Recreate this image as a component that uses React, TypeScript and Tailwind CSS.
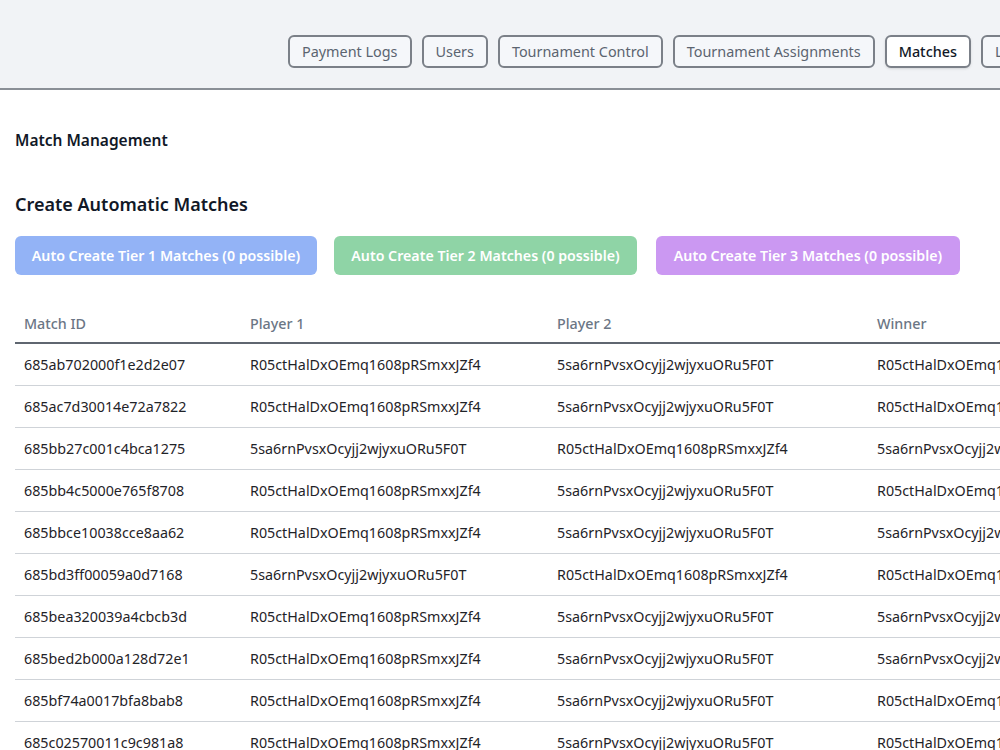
const tabs = [
  "Payment Logs",
  "Users",
  "Tournament Control",
  "Tournament Assignments",
  "Matches",
  "Leaderboard",
];

const A = "R05ctHalDxOEmq1608pRSmxxJZf4";
const B = "5sa6rnPvsxOcyjj2wjyxuORu5F0T";

const matches = [
  { id: "685ab702000f1e2d2e07", p1: A, p2: B, winner: A },
  { id: "685ac7d30014e72a7822", p1: A, p2: B, winner: A },
  { id: "685bb27c001c4bca1275", p1: B, p2: A, winner: B },
  { id: "685bb4c5000e765f8708", p1: A, p2: B, winner: A },
  { id: "685bbce10038cce8aa62", p1: A, p2: B, winner: B },
  { id: "685bd3ff00059a0d7168", p1: B, p2: A, winner: A },
  { id: "685bea320039a4cbcb3d", p1: A, p2: B, winner: B },
  { id: "685bed2b000a128d72e1", p1: A, p2: B, winner: B },
  { id: "685bf74a0017bfa8bab8", p1: A, p2: B, winner: A },
  { id: "685c02570011c9c981a8", p1: A, p2: B, winner: A },
];

export default function App() {
  return (
    <div className="h-[750px] w-[1000px] overflow-hidden bg-white font-['Noto_Sans',sans-serif]">
      {/* top nav */}
      <div className="flex h-[90px] items-start gap-[10px] overflow-hidden whitespace-nowrap border-b-2 border-[#8a8f96] bg-[#f1f3f6] pl-[288px] pt-[35px]">
        {tabs.map((t) => (
          <button
            key={t}
            className={`h-[33px] shrink-0 rounded-md border-2 border-[#7b8088] px-[12px] text-[14.4px] ${
              t === "Matches"
                ? "bg-white font-medium text-[#111827] shadow-sm"
                : "bg-[#f5f7fa] text-[#5b6470]"
            }`}
          >
            {t}
          </button>
        ))}
      </div>

      <div className="px-[15px]">
        <h2 className="mt-[39px] text-[15.5px] font-semibold text-[#111827]">
          Match Management
        </h2>

        <h3 className="mt-[39px] text-[18px] font-semibold text-[#111827]">
          Create Automatic Matches
        </h3>

        <div className="mt-[18px] flex">
          <button className="h-[39px] w-[302px] rounded-md bg-[#93b3f6] text-[14.2px] font-semibold text-white">
            Auto Create Tier 1 Matches (0 possible)
          </button>
          <button className="ml-[17px] h-[39px] w-[303px] rounded-md bg-[#8fd4a6] text-[14.2px] font-semibold text-white">
            Auto Create Tier 2 Matches (0 possible)
          </button>
          <button className="ml-[19px] h-[39px] w-[304px] rounded-md bg-[#cb98f2] text-[14.2px] font-semibold text-white">
            Auto Create Tier 3 Matches (0 possible)
          </button>
        </div>

        <table className="mt-[29px] w-[1200px] table-fixed border-collapse text-left text-[14.3px]">
          <colgroup>
            <col className="w-[226px]" />
            <col className="w-[307px]" />
            <col className="w-[320px]" />
            <col className="w-[347px]" />
          </colgroup>
          <thead>
            <tr className="h-[39px] border-b-2 border-[#5f6670]">
              <th className="px-[9px] font-medium text-[#6b7685]">Match ID</th>
              <th className="px-[9px] font-medium text-[#6b7685]">Player 1</th>
              <th className="px-[9px] font-medium text-[#6b7685]">Player 2</th>
              <th className="px-[9px] font-medium text-[#6b7685]">Winner</th>
            </tr>
          </thead>
          <tbody>
            {matches.map((m) => (
              <tr key={m.id} className="h-[42px] border-b border-[#cfd3d8] text-[#1f2328]">
                <td className="px-[9px]">{m.id}</td>
                <td className="px-[9px]">{m.p1}</td>
                <td className="px-[9px]">{m.p2}</td>
                <td className="px-[9px]">{m.winner}</td>
              </tr>
            ))}
          </tbody>
        </table>
      </div>
    </div>
  );
}
